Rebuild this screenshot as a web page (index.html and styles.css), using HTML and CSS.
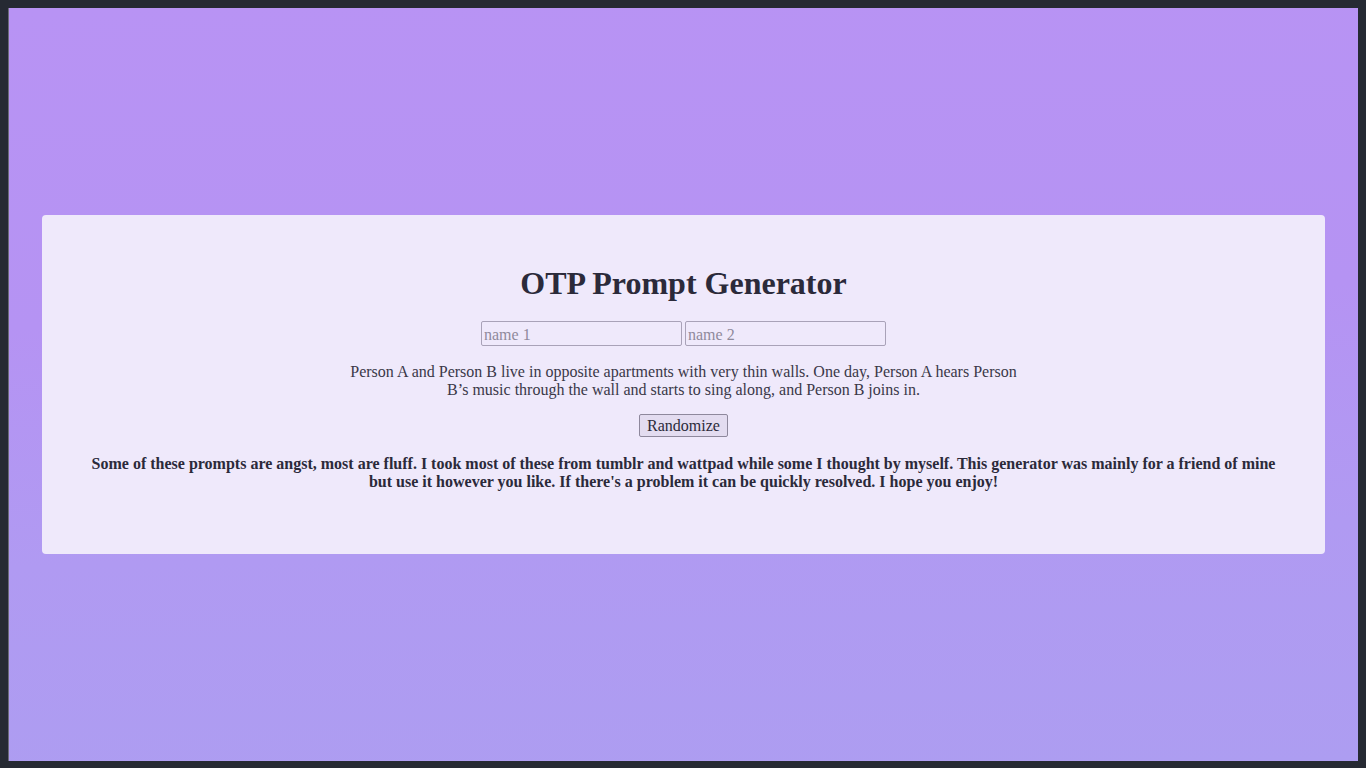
FILE: index.html
```html
<!DOCTYPE html>
<html>
<head>
<meta charset="utf-8">
<title>OTP Prompt Generator</title>
<link rel="stylesheet" href="styles.css">
</head>
<body>
<div class="frame">
  <main class="card">
    <h1 class="title">OTP Prompt Generator</h1>
    <div class="names">
      <input class="name" type="text" placeholder="name 1">
      <input class="name" type="text" placeholder="name 2">
    </div>
    <p class="prompt">Person A and Person B live in opposite apartments with very thin walls. One day, Person A hears Person B’s music through the wall and starts to sing along, and Person B joins in.</p>
    <button class="btn" type="button">Randomize</button>
    <p class="note">Some of these prompts are angst, most are fluff. I took most of these from tumblr and wattpad while some I thought by myself. This generator was mainly for a friend of mine but use it however you like. If there's a problem it can be quickly resolved. I hope you enjoy!</p>
  </main>
</div>
</body>
</html>
```
FILE: styles.css
```css
html, body {
  margin: 0;
  padding: 0;
  height: 100%;
  background: #262a33;
}
body {
  padding: 8px 8px 7px 8px;
  box-sizing: border-box;
  font-family: "Liberation Serif", "Times New Roman", serif;
}
.frame {
  height: 100%;
  box-sizing: border-box;
  border-left: 1px solid #6b6a78;
  background: linear-gradient(178deg, #b893f4 0%, #b593f3 40%, #b09af2 70%, #ad9df1 100%);
  display: flex;
  align-items: center;
  justify-content: center;
  padding: 0 33px 0 33px;
}
.card {
  width: 100%;
  box-sizing: border-box;
  background: #efe9fb;
  border-radius: 4px;
  padding: 50px 48px 63px;
  text-align: center;
  color: #2b2a3a;
}
.title {
  font-size: 32px;
  font-weight: bold;
  margin: 0 0 19px;
  line-height: 37px;
}
.names {
  display: flex;
  justify-content: center;
  gap: 3px;
}
.name {
  width: 201px;
  height: 25px;
  box-sizing: border-box;
  border: 1px solid #a9a2b8;
  border-radius: 2px;
  background: #efe9fb;
  font-family: "Liberation Serif", "Times New Roman", serif;
  font-size: 16px;
  padding: 2px 2px 0;
  color: #2b2a3a;
}
.name::placeholder {
  color: #8f8a9c;
}
.prompt {
  max-width: 672px;
  margin: 17px auto 15px;
  font-size: 16px;
  line-height: 18px;
  color: #3a3848;
}
.btn {
  font-family: "Liberation Serif", "Times New Roman", serif;
  font-size: 16px;
  color: #2b2a3a;
  background: #e3dcf0;
  border: 1px solid #8e889c;
  border-radius: 2px;
  height: 23px;
  padding: 0 7px;
  line-height: 20px;
}
.note {
  font-size: 16px;
  font-weight: bold;
  line-height: 18px;
  margin: 18px 0 0;
  color: #2b2a3a;
}
```
